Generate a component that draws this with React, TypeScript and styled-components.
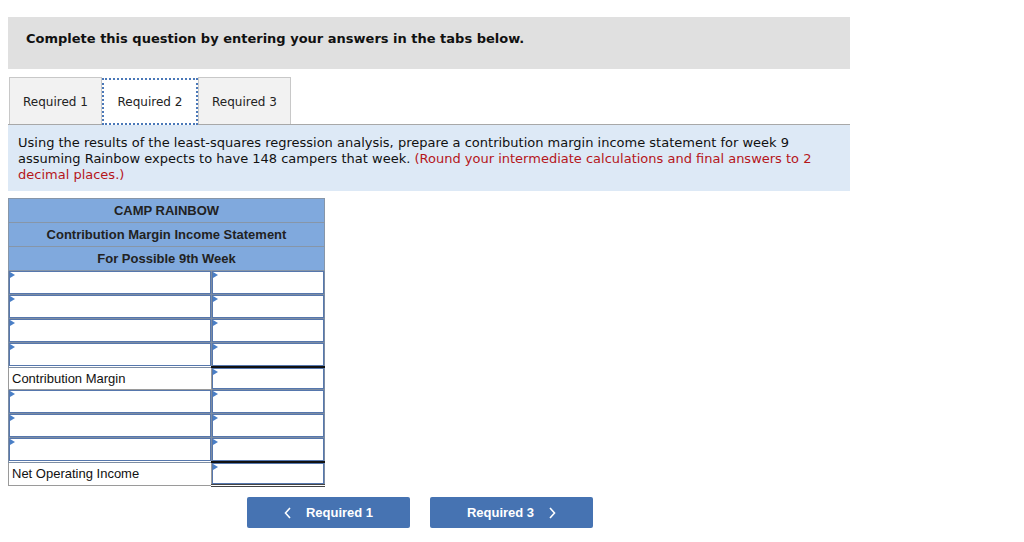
import React from "react";
import styled, { createGlobalStyle } from "styled-components";

const Global = createGlobalStyle`
  html, body { margin: 0; padding: 0; background: #fff; }
  body { font-family: "DejaVu Sans", Verdana, sans-serif; color: #000; }
`;

const Page = styled.div`
  width: 842px;
  padding: 17px 8px 0 8px;
`;

const Banner = styled.div`
  box-sizing: border-box;
  background: #e0e0e0;
  height: 52px;
  padding: 14px 18px 0 18px;
  font-weight: bold;
  font-size: 13px;
  line-height: 16px;
  color: #111;
`;

const TabBar = styled.div`
  margin-top: 8px;
  display: flex;
  align-items: flex-end;
  border-bottom: 1px solid #a8a8a8;
  padding-left: 1px;
`;

const Tab = styled.div<{ $active?: boolean }>`
  box-sizing: border-box;
  height: 47px;
  width: ${(p) => (p.$active ? 96 : 93)}px;
  display: flex;
  align-items: center;
  justify-content: center;
  padding-top: ${(p) => (p.$active ? "0" : "2px")};
  font-size: 12px;
  color: #222;
  background: ${(p) => (p.$active ? "#fff" : "#f2f2f2")};
  border: ${(p) => (p.$active ? "2px dotted #4a78b8" : "1px solid #c8c8c8")};
  border-bottom: ${(p) => (p.$active ? "2px dotted #4a78b8" : "none")};
  margin-bottom: ${(p) => (p.$active ? "-1px" : "0")};
`;

const Instructions = styled.div`
  background: #dde9f6;
  padding: 10px 24px 8px 10px;
  font-size: 13px;
  line-height: 16px;
  color: #111;
`;

const Red = styled.span`
  color: #b5161b;
`;

const Table = styled.table`
  margin-top: 7px;
  border-collapse: collapse;
  width: 317px;
  font-family: "Liberation Sans", Arial, sans-serif;
  font-size: 13px;
`;

const HeadCell = styled.td`
  background: #80a9dd;
  border: 1px solid #8796a8;
  height: 23px;
  padding: 0;
  text-align: center;
  font-weight: bold;
  color: #222;
`;

const Cell = styled.td<{ $w: number; $total?: boolean; $double?: boolean }>`
  width: ${(p) => p.$w}px;
  height: ${(p) => (p.$total ? 21 : 23)}px;
  padding: 0;
  border: 1px solid #7d8da3;
  ${(p) => (p.$total ? "border-top: 2px solid #111;" : "")}
  ${(p) => (p.$double ? "border-bottom: 3px double #444;" : "")}
  background: #fff;
  vertical-align: top;
`;

const LabelCell = styled.td`
  padding: 0 0 0 3px;
  border: 1px solid #9a9a9a;
  background: #fff;
  color: #111;
`;

const InputBox = styled.div<{ $short?: boolean }>`
  position: relative;
  box-sizing: border-box;
  height: ${(p) => (p.$short ? 21 : 23)}px;
  border: 1px solid #5677ad;
`;

const Marker = styled.span`
  position: absolute;
  left: 0;
  top: 0;
  width: 0;
  height: 0;
  border-top: 3px solid transparent;
  border-bottom: 3px solid transparent;
  border-left: 5px solid #4a7fc6;
`;

const NavRow = styled.div`
  display: flex;
  gap: 20px;
  margin-top: 10px;
  padding-left: 239px;
`;

const NavButton = styled.button`
  width: 163px;
  height: 31px;
  background: #4673b2;
  color: #fff;
  border: none;
  border-radius: 2px;
  font-family: "Liberation Sans", Arial, sans-serif;
  font-weight: bold;
  font-size: 13px;
  display: flex;
  align-items: center;
  justify-content: center;
  gap: 14px;
  cursor: pointer;
`;

const Input = ({ short }: { short?: boolean }) => (
  <InputBox $short={short}>
    <Marker />
  </InputBox>
);

type Row = { label?: string; total?: boolean; double?: boolean };
const rows: Row[] = [
  {},
  {},
  {},
  {},
  { label: "Contribution Margin", total: true },
  {},
  {},
  {},
  { label: "Net Operating Income", total: true, double: true },
];

const Chevron = ({ dir }: { dir: "l" | "r" }) => (
  <svg width="8" height="12" viewBox="0 0 8 12">
    <path
      d={dir === "l" ? "M6 1 L1.5 6 L6 11" : "M2 1 L6.5 6 L2 11"}
      fill="none"
      stroke="#fff"
      strokeWidth="1.6"
    />
  </svg>
);

export default function App() {
  return (
    <Page>
      <Global />
      <Banner>Complete this question by entering your answers in the tabs below.</Banner>
      <TabBar>
        <Tab>Required 1</Tab>
        <Tab $active>Required 2</Tab>
        <Tab>Required 3</Tab>
      </TabBar>
      <Instructions>
        Using the results of the least-squares regression analysis, prepare a contribution margin income statement for week 9
        assuming Rainbow expects to have 148 campers that week.{" "}
        <Red>(Round your intermediate calculations and final answers to 2 decimal places.)</Red>
      </Instructions>
      <Table>
        <tbody>
          <tr>
            <HeadCell colSpan={2}>CAMP RAINBOW</HeadCell>
          </tr>
          <tr>
            <HeadCell colSpan={2}>Contribution Margin Income Statement</HeadCell>
          </tr>
          <tr>
            <HeadCell colSpan={2}>For Possible 9th Week</HeadCell>
          </tr>
          {rows.map((r, i) => (
            <tr key={i}>
              {r.label ? (
                <LabelCell>{r.label}</LabelCell>
              ) : (
                <Cell $w={204}>
                  <Input />
                </Cell>
              )}
              <Cell $w={113} $total={r.total} $double={r.double}>
                <Input short={r.total} />
              </Cell>
            </tr>
          ))}
        </tbody>
      </Table>
      <NavRow>
        <NavButton>
          <Chevron dir="l" />
          <span>Required 1</span>
        </NavButton>
        <NavButton>
          <span>Required 3</span>
          <Chevron dir="r" />
        </NavButton>
      </NavRow>
    </Page>
  );
}
